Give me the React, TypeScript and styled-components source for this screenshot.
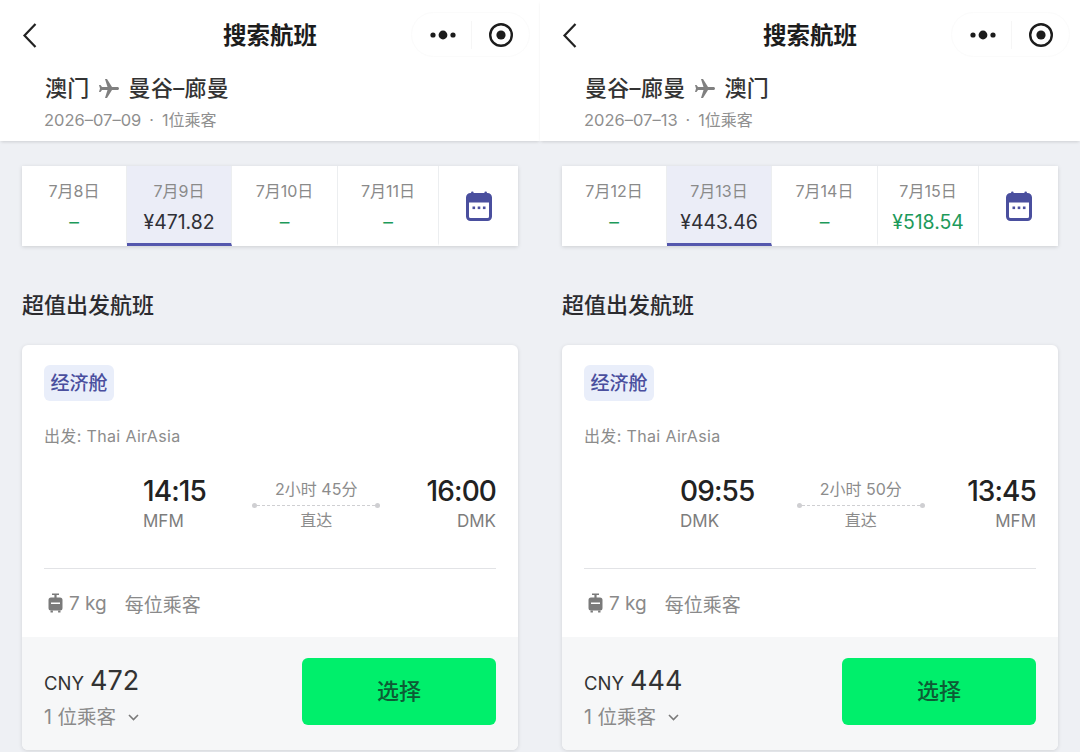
import React from 'react'
import styled, { createGlobalStyle } from 'styled-components'

const GlobalStyle = createGlobalStyle`
    html, body {
        margin: 0;
        height: 752px;
        overflow: hidden;
        background: #eef0f4;
        font-family: Inter, "Noto Sans CJK SC", "Noto Sans", sans-serif;
    }
    * {
        box-sizing: border-box;
    }
`

const Page = styled.div`
    display: flex;
    width: 1080px;
    height: 752px;
    overflow: hidden;
`

const Panel = styled.section`
    flex: 0 0 540px;
    display: flex;
    flex-direction: column;
`

const Header = styled.header`
    height: 141px;
    background: #fff;
    box-shadow: 0 2px 3px -1px rgba(0, 0, 0, 0.14);
`

const NavBar = styled.div`
    position: relative;
    display: flex;
    align-items: center;
    justify-content: center;
    height: 70px;
    padding-top: 2px;
`

const BackIcon = styled.svg`
    position: absolute;
    left: 22px;
    top: 22px;
    width: 16px;
    height: 27px;
`

const NavTitle = styled.h1`
    margin: 0;
    font-size: 23.5px;
    font-weight: 700;
    color: #1c1c1c;
    line-height: 1;
`

const Capsule = styled.div`
    position: absolute;
    left: 411px;
    top: 12px;
    display: flex;
    align-items: center;
    width: 119px;
    height: 45px;
    padding-left: 2px;
    border: 1px solid #fbfbfb;
    border-radius: 23px;
`

const CapsuleSlot = styled.div`
    flex: 1;
    display: flex;
    align-items: center;
    justify-content: center;
    & + & {
        height: 28px;
        border-left: 1px solid #f6f6f6;
    }
`

const Route = styled.div`
    display: flex;
    align-items: center;
    height: 36px;
    margin-top: -2px;
    padding-left: 45px;
    font-size: 22px;
    font-weight: 500;
    letter-spacing: 0.3px;
    color: #333;
`

const PlaneIcon = styled.svg`
    width: 24px;
    height: 24px;
    margin: 6px 8px 0 7px;
    fill: #808080;
`

const TripInfo = styled.div`
    margin-top: 5px;
    padding-left: 44px;
    font-size: 16px;
    line-height: 22px;
    color: #8f8f8f;
`

const TripDate = styled.span`
    font-size: 16.5px;
`

const TripDot = styled.span`
    margin: 0 8px;
`

const Body = styled.div`
    padding: 25px 22px 0;
`

const DateStrip = styled.div`
    display: flex;
    height: 80px;
    background: #fff;
    box-shadow: 0 1px 4px rgba(0, 0, 0, 0.14);
`

const DateCell = styled.div<{ $width: number; $active?: boolean }>`
    flex: 0 0 ${p => p.$width}px;
    display: flex;
    flex-direction: column;
    align-items: center;
    padding-top: 15px;
    background: ${p => (p.$active ? '#ebedf7' : '#fff')};
    border-right: 1px solid #eceef0;
    border-bottom: 3px solid ${p => (p.$active ? '#5457ad' : 'transparent')};
`

const DateLabel = styled.div`
    font-size: 16px;
    line-height: 21px;
    color: #8a8a8a;
`

const DatePrice = styled.div<{ $tone: 'dark' | 'green' }>`
    margin-top: 8px;
    font-size: 19.4px;
    line-height: 24px;
    color: ${p => (p.$tone === 'dark' ? '#303036' : '#1d9a5b')};
`

const CalendarCell = styled.div`
    flex: 1;
    display: flex;
    align-items: center;
    justify-content: center;
`

const SectionTitle = styled.h2`
    margin: 44px 0 0;
    font-size: 22px;
    line-height: 30px;
    font-weight: 500;
    color: #2b2b2f;
`

const Card = styled.article`
    margin-top: 25px;
    height: 405px;
    display: flex;
    flex-direction: column;
    background: #fff;
    border-radius: 6px;
    overflow: hidden;
    box-shadow: 0 1px 4px rgba(0, 0, 0, 0.12);
`

const CardMain = styled.div`
    flex: 1;
    padding: 20px 22px 0;
`

const CabinTag = styled.span`
    display: inline-flex;
    align-items: center;
    justify-content: center;
    width: 70px;
    height: 36px;
    padding-bottom: 3px;
    border-radius: 6px;
    background: #e9eefa;
    font-size: 19px;
    font-weight: 500;
    color: #4a4f9e;
`

const Airline = styled.div`
    margin-top: 23px;
    font-size: 16px;
    line-height: 24px;
    color: #8c8c8c;
    letter-spacing: 0.35px;
`

const TimeRow = styled.div<{ $offset: number }>`
    display: flex;
    align-items: flex-start;
    height: 96px;
    margin-top: 25px;
    padding-left: ${p => p.$offset}px;
    border-bottom: 1px solid #e2e3e6;
`

const Stop = styled.div<{ $end?: boolean }>`
    display: flex;
    flex-direction: column;
    align-items: ${p => (p.$end ? 'flex-end' : 'flex-start')};
`

const Time = styled.div`
    font-size: 28px;
    line-height: 36px;
    font-weight: 500;
    color: #222;
    letter-spacing: -0.9px;
`

const Airport = styled.div`
    margin-top: 1px;
    font-size: 17px;
    line-height: 22px;
    color: #7d7d7d;
`

const Leg = styled.div`
    flex: 1;
    display: flex;
    flex-direction: column;
    align-items: center;
    color: #8c8c8c;
    font-size: 16px;
`

const Duration = styled.div`
    line-height: 22px;
    margin-top: 5px;
`

const LegLine = styled.div`
    position: relative;
    width: 128px;
    margin: 5px 0 3px;
    border-top: 1px dashed #cfcfd2;
    &::before,
    &::after {
        content: '';
        position: absolute;
        top: -3px;
        width: 5px;
        height: 5px;
        border-radius: 50%;
        background: #cfcfd2;
    }
    &::before {
        left: 0;
    }
    &::after {
        right: 0;
    }
`

const Direct = styled.div`
    line-height: 22px;
`

const Baggage = styled.div`
    display: flex;
    align-items: center;
    height: 68px;
    padding-left: 4px;
    color: #8a8a8a;
    font-size: 19px;
`

const Weight = styled.span`
    margin: 0 18px 0 6px;
`

const CardFooter = styled.div`
    display: flex;
    justify-content: space-between;
    height: 113px;
    padding: 21px 22px 0;
    background: #f6f7f8;
`

const Fare = styled.div`
    display: flex;
    flex-direction: column;
`

const Amount = styled.div`
    display: flex;
    align-items: baseline;
    gap: 6px;
    height: 42px;
    margin-top: 2px;
    font-size: 18.5px;
    line-height: 42px;
    color: #333;
`

const AmountValue = styled.span`
    font-size: 27px;
`

const Passengers = styled.div`
    display: flex;
    align-items: center;
    gap: 12px;
    margin-top: 1px;
    font-size: 19.5px;
    line-height: 28px;
    color: #8a8a8a;
`

const SelectButton = styled.button`
    width: 194px;
    height: 67px;
    padding: 0 0 5px;
    border: 0;
    border-radius: 6px;
    background: #00ef6b;
    font-family: inherit;
    font-size: 22px;
    font-weight: 500;
    color: #0d5b35;
`

const Back = () => (
    <BackIcon viewBox="0 0 16 27" fill="none" stroke="#222" strokeWidth="2.2">
        <path d="M13.5 2 L2.5 13.5 L13.5 25" />
    </BackIcon>
)

const Dots = () => (
    <svg width="28" height="10" viewBox="0 0 28 10" fill="#1c1c1c">
        <circle cx="4" cy="5" r="2.6" />
        <circle cx="14" cy="5" r="4.4" />
        <circle cx="24" cy="5" r="2.6" />
    </svg>
)

const Record = () => (
    <svg width="26" height="26" viewBox="0 0 26 26">
        <circle cx="13" cy="13" r="10.8" fill="none" stroke="#1c1c1c" strokeWidth="2.4" />
        <circle cx="13" cy="13" r="4.6" fill="#1c1c1c" />
    </svg>
)

const Plane = () => (
    <PlaneIcon viewBox="0 0 24 24">
        <path
            transform="rotate(90 12 12)"
            d="M21 16v-2l-8-5V3.5c0-.83-.67-1.5-1.5-1.5S10 2.67 10 3.5V9l-8 5v2l8-2.5V19l-2 1.5V22l3.5-1 3.5 1v-1.5L13 19v-5.5l8 2.5z"
        />
    </PlaneIcon>
)

const Calendar = () => (
    <svg width="26" height="30" viewBox="0 0 26 30">
        <rect x="5" y="0.5" width="2.6" height="6" rx="1.2" fill="#4a4f9e" />
        <rect x="18.4" y="0.5" width="2.6" height="6" rx="1.2" fill="#4a4f9e" />
        <rect x="1.5" y="3.5" width="23" height="25" rx="3" fill="#fff" stroke="#4a4f9e" strokeWidth="3" />
        <path d="M1 6.5a3 3 0 0 1 3-3h18a3 3 0 0 1 3 3v5H1z" fill="#4a4f9e" />
        <rect x="6.5" y="15.5" width="2.6" height="2.6" fill="#4a4f9e" />
        <rect x="11.7" y="15.5" width="2.6" height="2.6" fill="#4a4f9e" />
        <rect x="16.9" y="15.5" width="2.6" height="2.6" fill="#4a4f9e" />
    </svg>
)

const Luggage = () => (
    <svg width="15" height="20" viewBox="0 0 15 20" fill="#7a7a7a">
        <path d="M4 0.5h7v1.6H8.6v2.4h3.4A2.5 2.5 0 0 1 14.5 7v8a2.5 2.5 0 0 1-2.5 2.5H3A2.5 2.5 0 0 1 .5 15V7A2.5 2.5 0 0 1 3 4.5h3.4V2.1H4z" />
        <rect x="2.5" y="17.5" width="2.4" height="2" />
        <rect x="10.1" y="17.5" width="2.4" height="2" />
        <rect x="3" y="9.5" width="9" height="1.5" fill="#fff" />
    </svg>
)

const Chevron = () => (
    <svg width="11" height="7" viewBox="0 0 11 7" fill="none" stroke="#7a7a7a" strokeWidth="1.6">
        <path d="M1 1 L5.5 5.5 L10 1" />
    </svg>
)

type DateItem = { label: string; price?: string }

type Trip = {
    from: string
    to: string
    date: string
    dates: DateItem[]
    activeIndex: number
    departTime: string
    departCode: string
    arriveTime: string
    arriveCode: string
    duration: string
    rowOffset: number
    fare: string
}

const trips: Trip[] = [
    {
        from: '澳门',
        to: '曼谷–廊曼',
        date: '2026–07–09',
        dates: [{ label: '7月8日' }, { label: '7月9日', price: '¥471.82' }, { label: '7月10日' }, { label: '7月11日' }],
        activeIndex: 1,
        departTime: '14:15',
        departCode: 'MFM',
        arriveTime: '16:00',
        arriveCode: 'DMK',
        duration: '2小时 45分',
        rowOffset: 99,
        fare: '472',
    },
    {
        from: '曼谷–廊曼',
        to: '澳门',
        date: '2026–07–13',
        dates: [
            { label: '7月12日' },
            { label: '7月13日', price: '¥443.46' },
            { label: '7月14日' },
            { label: '7月15日', price: '¥518.54' },
        ],
        activeIndex: 1,
        departTime: '09:55',
        departCode: 'DMK',
        arriveTime: '13:45',
        arriveCode: 'MFM',
        duration: '2小时 50分',
        rowOffset: 96,
        fare: '444',
    },
]

const cellWidths = [105, 105, 106, 101]

const TripPanel = ({ trip }: { trip: Trip }) => (
    <Panel>
        <Header>
            <NavBar>
                <Back />
                <NavTitle>搜索航班</NavTitle>
                <Capsule>
                    <CapsuleSlot>
                        <Dots />
                    </CapsuleSlot>
                    <CapsuleSlot>
                        <Record />
                    </CapsuleSlot>
                </Capsule>
            </NavBar>
            <Route>
                {trip.from}
                <Plane />
                {trip.to}
            </Route>
            <TripInfo>
                <TripDate>{trip.date}</TripDate>
                <TripDot>·</TripDot>1位乘客
            </TripInfo>
        </Header>
        <Body>
            <DateStrip>
                {trip.dates.map((item, i) => (
                    <DateCell key={item.label} $width={cellWidths[i]} $active={i === trip.activeIndex}>
                        <DateLabel>{item.label}</DateLabel>
                        <DatePrice $tone={i === trip.activeIndex ? 'dark' : 'green'}>{item.price ?? '–'}</DatePrice>
                    </DateCell>
                ))}
                <CalendarCell>
                    <Calendar />
                </CalendarCell>
            </DateStrip>
            <SectionTitle>超值出发航班</SectionTitle>
            <Card>
                <CardMain>
                    <CabinTag>经济舱</CabinTag>
                    <Airline>出发: Thai AirAsia</Airline>
                    <TimeRow $offset={trip.rowOffset}>
                        <Stop>
                            <Time>{trip.departTime}</Time>
                            <Airport>{trip.departCode}</Airport>
                        </Stop>
                        <Leg>
                            <Duration>{trip.duration}</Duration>
                            <LegLine />
                            <Direct>直达</Direct>
                        </Leg>
                        <Stop $end>
                            <Time>{trip.arriveTime}</Time>
                            <Airport>{trip.arriveCode}</Airport>
                        </Stop>
                    </TimeRow>
                    <Baggage>
                        <Luggage />
                        <Weight>7 kg</Weight>
                        每位乘客
                    </Baggage>
                </CardMain>
                <CardFooter>
                    <Fare>
                        <Amount>
                            CNY <AmountValue>{trip.fare}</AmountValue>
                        </Amount>
                        <Passengers>
                            1 位乘客
                            <Chevron />
                        </Passengers>
                    </Fare>
                    <SelectButton>选择</SelectButton>
                </CardFooter>
            </Card>
        </Body>
    </Panel>
)

export default function App() {
    return (
        <Page>
            <GlobalStyle />
            {trips.map(trip => (
                <TripPanel key={trip.date} trip={trip} />
            ))}
        </Page>
    )
}
